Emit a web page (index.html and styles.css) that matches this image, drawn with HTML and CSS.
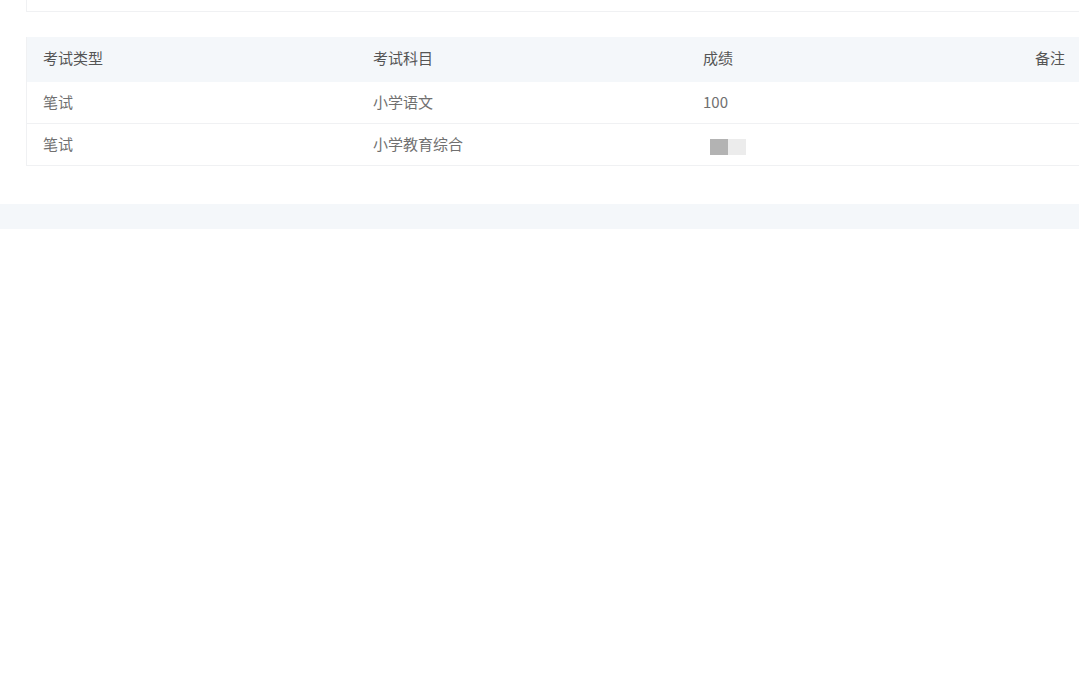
FILE: index.html
```html
<!DOCTYPE html>
<html lang="zh-CN">
<head>
    <meta charset="UTF-8">
    <meta name="viewport" content="width=device-width, initial-scale=1.0">
    <title>成绩查询</title>
    <link rel="stylesheet" href="styles.css">
</head>
<body>
    <div class="page">
        <div class="top-card"></div>

        <table class="score-table">
            <thead>
                <tr>
                    <th>考试类型</th>
                    <th>考试科目</th>
                    <th>成绩</th>
                    <th class="right">备注</th>
                </tr>
            </thead>
            <tbody>
                <tr>
                    <td>笔试</td>
                    <td>小学语文</td>
                    <td>100</td>
                    <td></td>
                </tr>
                <tr>
                    <td>笔试</td>
                    <td>小学教育综合</td>
                    <td><span class="masked"><i></i><i></i></span></td>
                    <td></td>
                </tr>
            </tbody>
        </table>

        <div class="footer-band"></div>
    </div>
</body>
</html>
```

FILE: styles.css
```css
html, body {
    margin: 0;
    padding: 0;
    background: #fff;
    overflow: hidden;
}
body {
    font-family: "Noto Sans CJK SC", "Noto Sans", sans-serif;
    font-size: 15px;
    color: #666;
}
.page {
    width: 1079px;
    height: 691px;
}
.top-card {
    margin-left: 26px;
    width: 1060px;
    height: 12px;
    border: 1px solid #f0f1f3;
    border-top: none;
    box-sizing: border-box;
}
.score-table {
    margin: 25px 0 0 26px;
    width: 1056px;
    border-collapse: collapse;
    table-layout: fixed;
    border: 1px solid #f0f1f3;
    border-top: none;
}
.score-table th {
    height: 41px;
    background: #f4f7fa;
    font-weight: normal;
    color: #555;
    text-align: left;
    padding: 0 16px 4px;
}
.score-table td {
    height: 38px;
    padding: 0 16px 3px;
    color: #707070;
    border-bottom: 1px solid #f0f1f3;
}
.score-table th:nth-child(1),
.score-table td:nth-child(1) { width: 298px; }
.score-table th:nth-child(2),
.score-table td:nth-child(2) { width: 298px; }
.score-table th:nth-child(3),
.score-table td:nth-child(3) { width: 298px; }
.score-table .right {
    text-align: right;
}
.masked {
    display: inline-flex;
    vertical-align: middle;
    margin: 6px 0 0 7px;
}
.masked i {
    width: 18px;
    height: 16px;
    background: #b3b3b3;
}
.masked i + i {
    background: #ececec;
}
.footer-band {
    margin-top: 38px;
    height: 25px;
    background: #f4f7fa;
}
```
